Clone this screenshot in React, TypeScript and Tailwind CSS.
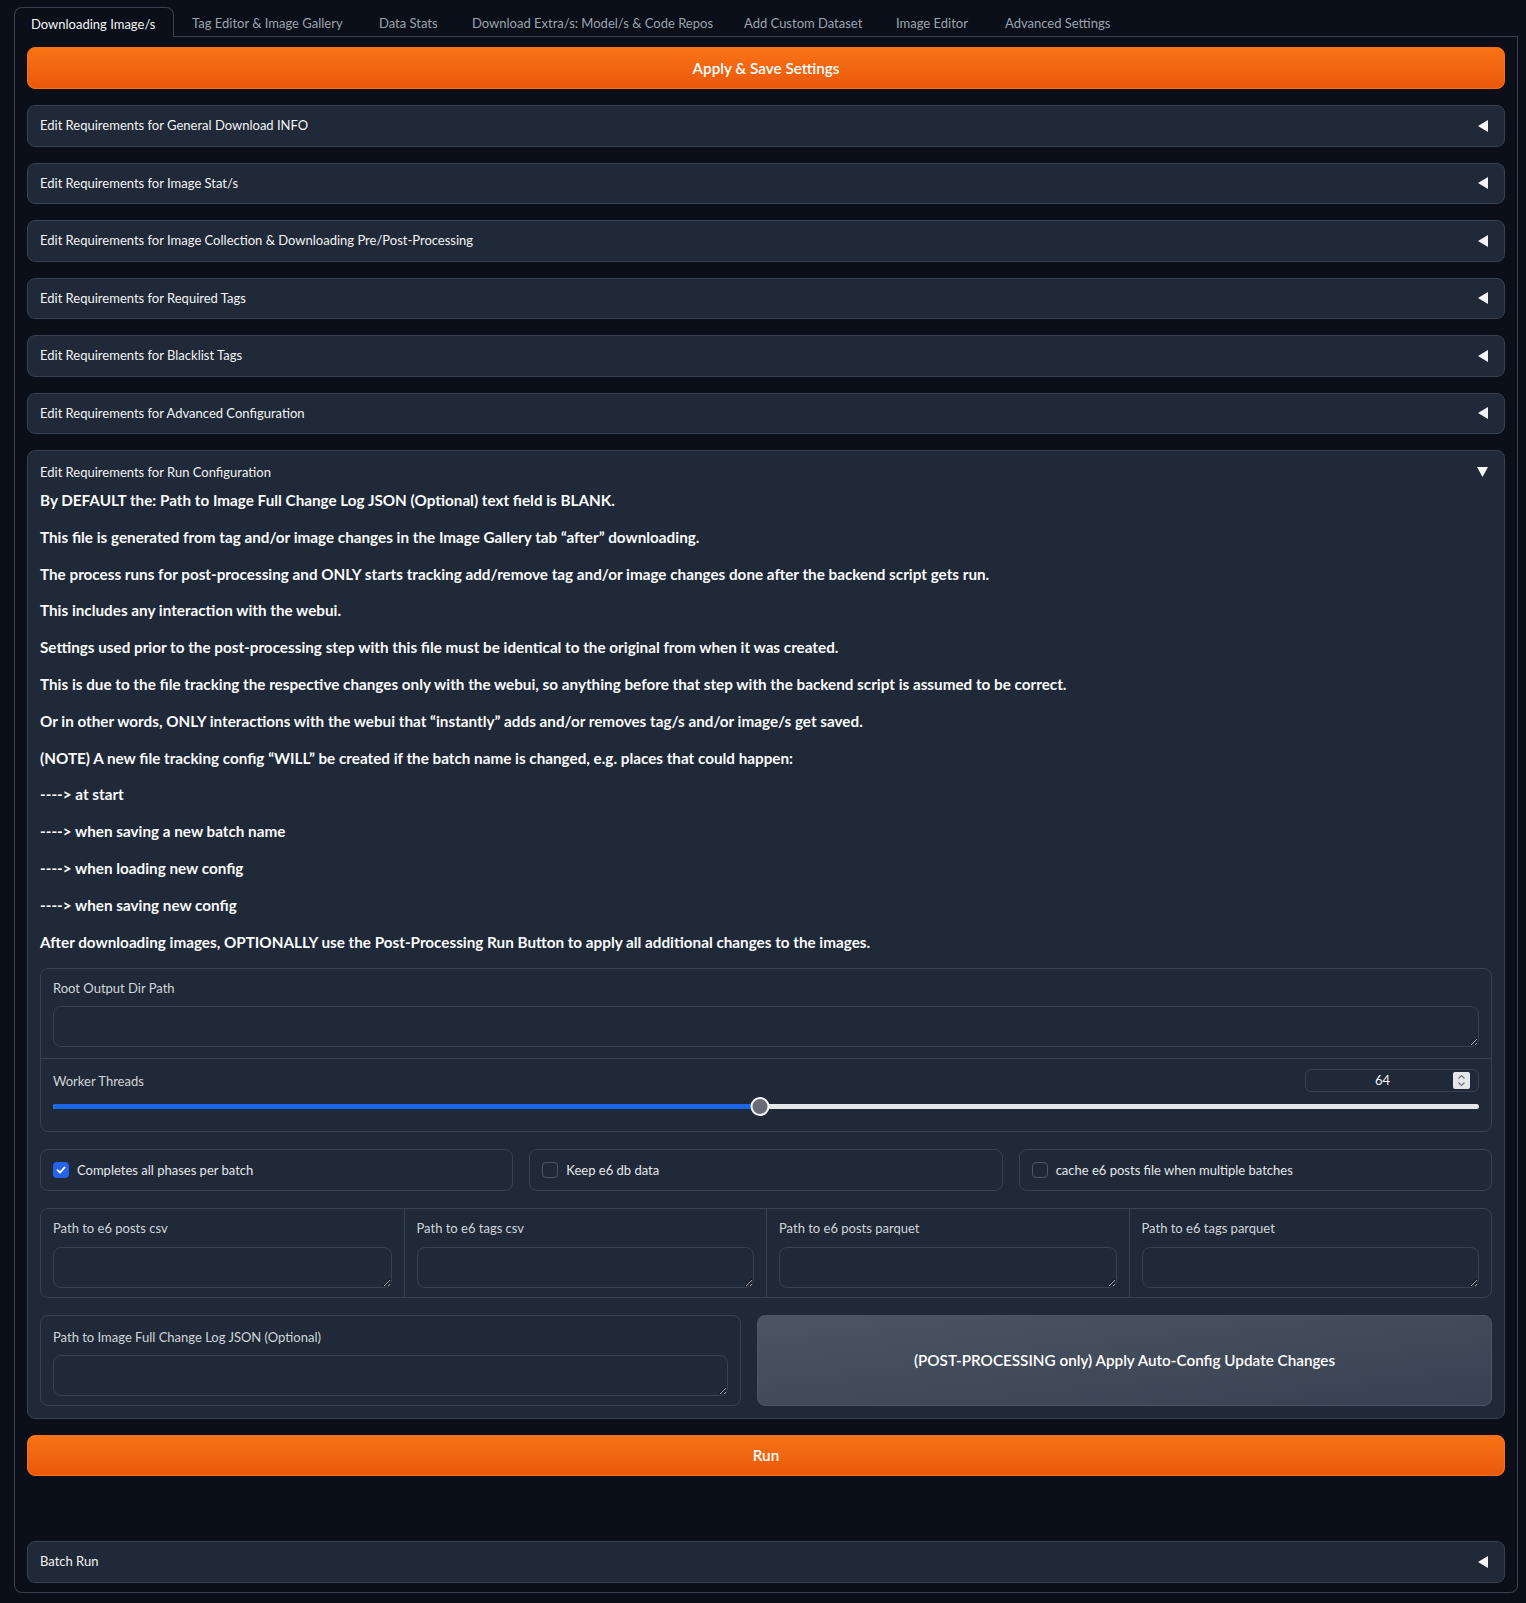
import React from "react";

const tabs = [
  { label: "Downloading Image/s", w: "w-[162px]" },
  { label: "Tag Editor & Image Gallery", w: "w-[187px]" },
  { label: "Data Stats", w: "w-[93px]" },
  { label: "Download Extra/s: Model/s & Code Repos", w: "w-[272px]" },
  { label: "Add Custom Dataset", w: "w-[152px]" },
  { label: "Image Editor", w: "w-[109px]" },
  { label: "Advanced Settings", w: "w-[160px]" },
];

const closedSections = [
  "Edit Requirements for General Download INFO",
  "Edit Requirements for Image Stat/s",
  "Edit Requirements for Image Collection & Downloading Pre/Post-Processing",
  "Edit Requirements for Required Tags",
  "Edit Requirements for Blacklist Tags",
  "Edit Requirements for Advanced Configuration",
];

const notes = [
  "By DEFAULT the: Path to Image Full Change Log JSON (Optional) text field is BLANK.",
  "This file is generated from tag and/or image changes in the Image Gallery tab \u201cafter\u201d downloading.",
  "The process runs for post-processing and ONLY starts tracking add/remove tag and/or image changes done after the backend script gets run.",
  "This includes any interaction with the webui.",
  "Settings used prior to the post-processing step with this file must be identical to the original from when it was created.",
  "This is due to the file tracking the respective changes only with the webui, so anything before that step with the backend script is assumed to be correct.",
  "Or in other words, ONLY interactions with the webui that \u201cinstantly\u201d adds and/or removes tag/s and/or image/s get saved.",
  "(NOTE) A new file tracking config \u201cWILL\u201d be created if the batch name is changed, e.g. places that could happen:",
  "----> at start",
  "----> when saving a new batch name",
  "----> when loading new config",
  "----> when saving new config",
  "After downloading images, OPTIONALLY use the Post-Processing Run Button to apply all additional changes to the images.",
];

function LeftArrow() {
  return (
    <svg width="10" height="12" viewBox="0 0 10 12" className="mr-[4px]">
      <polygon points="10,0 10,12 0,6" fill="#f3f4f6" />
    </svg>
  );
}

function DownArrow() {
  return (
    <svg width="11" height="10" viewBox="0 0 11 10" className="mr-[4px]">
      <polygon points="0,0 11,0 5.5,10" fill="#f3f4f6" />
    </svg>
  );
}

function Accordion({ label }: { label: string }) {
  return (
    <div className="flex h-[41.5px] items-center justify-between rounded-[8px] border border-[#374151] bg-[#1f2937] px-[12px]">
      <span className="text-[13px] text-[#f3f4f6]">{label}</span>
      <LeftArrow />
    </div>
  );
}

function OrangeButton({ label, h }: { label: string; h: string }) {
  return (
    <button
      className={`flex ${h} w-full items-center justify-center rounded-[8px] border border-[#f97316] bg-gradient-to-b from-[#f97316] to-[#ea580c] text-[15.25px] font-semibold text-white`}
    >
      {label}
    </button>
  );
}

function TextBox() {
  return (
    <textarea
      rows={1}
      className="block h-[41px] w-full resize-y rounded-[8px] border border-[#374151] bg-[#1f2937] px-[10px] py-[8px] text-[13px] text-white outline-none"
    />
  );
}

function Checkbox({ label, checked }: { label: string; checked?: boolean }) {
  return (
    <div className="flex h-[42px] items-center gap-[8px] rounded-[8px] border border-[#374151] bg-[#1f2937] px-[12px]">
      {checked ? (
        <span className="flex h-[16px] w-[16px] items-center justify-center rounded-[4px] bg-[#2563eb]">
          <svg width="10" height="10" viewBox="0 0 10 10">
            <path d="M1.5 5.2 L4 7.6 L8.6 2.4" fill="none" stroke="white" strokeWidth="1.8" strokeLinecap="round" strokeLinejoin="round" />
          </svg>
        </span>
      ) : (
        <span className="h-[16px] w-[16px] rounded-[4px] border border-[#4b5563] bg-[#1f2937]" />
      )}
      <span className="text-[13px] text-[#e5e7eb]">{label}</span>
    </div>
  );
}

function WorkerSlider({ value, min, max }: { value: number; min: number; max: number }) {
  const pct = ((value - min) / (max - min)) * 100;
  return (
    <div className="relative mt-[4px] h-[20px]">
      <div className="absolute left-0 right-0 top-[7.5px] h-[5px] rounded-full bg-[#e5e7eb]" />
      <div className="absolute left-0 top-[7.5px] h-[5px] rounded-full bg-[#1a66e8]" style={{ width: `${pct}%` }} />
      <div
        className="absolute top-[0.5px] h-[19px] w-[19px] -translate-x-1/2 rounded-full border-2 border-[#f3f4f6] bg-[#6b6b78]"
        style={{ left: `${pct}%` }}
      />
    </div>
  );
}

export default function App() {
  return (
    <div className="min-h-[1603px] w-full bg-[#0b0f19] pl-[14px] pt-[7px] font-['Lato',sans-serif] text-[#f3f4f6]">
      <div className="w-[1504px]">
        {/* tab strip */}
        <div className="flex h-[30px] border-b border-[#374151] whitespace-nowrap">
          {tabs.map((t, i) =>
            i === 0 ? (
              <div key={t.label} className={`${t.w} shrink-0 pr-[2px]`}>
                <div className="-mb-px h-[30px] rounded-t-[8px] border border-b-0 border-[#374151] bg-[#0b0f19] pl-[16px] pt-[6px] text-[13px] leading-[20px] text-[#f3f4f6]">
                  {t.label}
                </div>
              </div>
            ) : (
              <div key={t.label} className={`${t.w} shrink-0 pl-[16px] pt-[6px] text-[13px] leading-[20px] text-[#9ca3af]`}>
                {t.label}
              </div>
            )
          )}
        </div>

        {/* tab panel */}
        <div className="flex flex-col gap-[16px] rounded-b-[8px] border border-t-0 border-[#374151] px-[12px] pb-[9px] pt-[10px]">
          <OrangeButton label="Apply & Save Settings" h="h-[42px]" />

          {closedSections.map((s) => (
            <Accordion key={s} label={s} />
          ))}

          {/* open accordion */}
          <div className="rounded-[8px] border border-[#374151] bg-[#1f2937] px-[12px] pb-[12px] pt-[12px]">
            <div className="flex items-center justify-between">
              <span className="text-[13px] leading-[18px]">Edit Requirements for Run Configuration</span>
              <DownArrow />
            </div>

            <div className="mt-[1px] text-[15.25px] font-bold text-[#f9fafb]">
              {notes.map((n) => (
                <p key={n} className="leading-[36.8px]">
                  {n}
                </p>
              ))}
            </div>

            <div className="mt-[8px] flex flex-col gap-[17px]">
              {/* root dir + worker threads */}
              <div className="rounded-[8px] border border-[#374151] bg-[#1f2937]">
                <div className="px-[12px] pb-[11px] pt-[10px]">
                  <div className="mb-[9px] text-[13px] leading-[18px] text-[#d1d5db]">Root Output Dir Path</div>
                  <TextBox />
                </div>
                <div className="border-t border-[#374151] px-[12px] pb-[15px] pt-[10px]">
                  <div className="flex h-[23px] items-center justify-between">
                    <span className="text-[13px] leading-[18px] text-[#d1d5db]">Worker Threads</span>
                    <div className="flex h-[23px] w-[174px] items-center rounded-[6px] border border-[#374151] pr-[8px]">
                      <span className="flex-1 pl-[6px] text-center text-[13px] text-[#f3f4f6]">64</span>
                      <span className="flex h-[17px] w-[17px] flex-col items-center justify-center rounded-[2px] bg-[#e5e7eb]">
                        <svg width="9" height="13" viewBox="0 0 9 13">
                          <path d="M1.5 4.5 L4.5 1.5 L7.5 4.5" fill="none" stroke="#6b7280" strokeWidth="1.2" />
                          <path d="M1.5 8.5 L4.5 11.5 L7.5 8.5" fill="none" stroke="#6b7280" strokeWidth="1.2" />
                        </svg>
                      </span>
                    </div>
                  </div>
                  <WorkerSlider value={64} min={1} max={128} />
                </div>
              </div>

              {/* checkboxes */}
              <div className="grid grid-cols-3 gap-[16px]">
                <Checkbox label="Completes all phases per batch" checked />
                <Checkbox label="Keep e6 db data" />
                <Checkbox label="cache e6 posts file when multiple batches" />
              </div>

              {/* csv / parquet paths */}
              <div className="grid grid-cols-4 rounded-[8px] border border-[#374151] bg-[#1f2937]">
                {["Path to e6 posts csv", "Path to e6 tags csv", "Path to e6 posts parquet", "Path to e6 tags parquet"].map(
                  (l, i) => (
                    <div key={l} className={`${i > 0 ? "border-l border-[#374151]" : ""} px-[12px] pb-[9px] pt-[10px]`}>
                      <div className="mb-[10px] text-[13px] leading-[18px] text-[#d1d5db]">{l}</div>
                      <TextBox />
                    </div>
                  )
                )}
              </div>

              {/* change log + post-processing */}
              <div className="grid grid-cols-[701px_1fr] gap-[16px]">
                <div className="rounded-[8px] border border-[#374151] bg-[#1f2937] px-[12px] pb-[9px] pt-[12px]">
                  <div className="mb-[9px] text-[13px] leading-[18px] text-[#d1d5db]">
                    Path to Image Full Change Log JSON (Optional)
                  </div>
                  <TextBox />
                </div>
                <button className="rounded-[8px] border border-[#4b5563] bg-gradient-to-br from-[#4b5563] to-[#374151] text-[15.25px] font-semibold text-white">
                  (POST-PROCESSING only) Apply Auto-Config Update Changes
                </button>
              </div>
            </div>
          </div>

          <OrangeButton label="Run" h="h-[41px]" />

          <div className="h-[33px]" />

          <Accordion label="Batch Run" />
        </div>
      </div>
    </div>
  );
}
